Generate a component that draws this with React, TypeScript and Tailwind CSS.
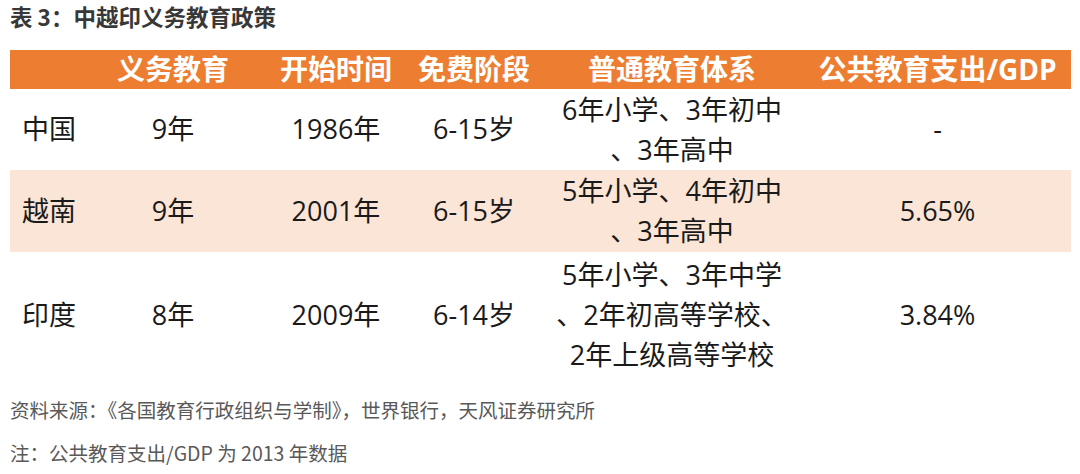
import React from "react";

const grid = "grid grid-cols-[100px_126px_200px_76px_320px_239px]";
const cell = "flex items-center justify-center whitespace-nowrap";

type RowData = {
  country: string;
  years: string;
  start: string;
  free: string;
  system: string[];
  gdp: string;
  h: string;
  bg: string;
};

const rows: RowData[] = [
  {
    country: "中国",
    years: "9年",
    start: "1986年",
    free: "6-15岁",
    system: ["6年小学、3年初中", "、3年高中"],
    gdp: "-",
    h: "h-[81px]",
    bg: "bg-white",
  },
  {
    country: "越南",
    years: "9年",
    start: "2001年",
    free: "6-15岁",
    system: ["5年小学、4年初中", "、3年高中"],
    gdp: "5.65%",
    h: "h-[82px]",
    bg: "bg-[#fbe5d6]",
  },
  {
    country: "印度",
    years: "8年",
    start: "2009年",
    free: "6-14岁",
    system: ["5年小学、3年中学", "、2年初高等学校、", "2年上级高等学校"],
    gdp: "3.84%",
    h: "h-[126px]",
    bg: "bg-white",
  },
];

export default function App() {
  return (
    <div className="w-[1080px] h-[474px] bg-white overflow-hidden font-['Open_Sans','Noto_Sans_CJK_SC',sans-serif]">
      <div className="pl-[10px] h-[33px] leading-[33px] text-[22.5px] font-bold text-[#383838] font-['Noto_Sans_CJK_SC',sans-serif]">
        表 3：中越印义务教育政策
      </div>
      <div className="ml-[10px] mt-[17px] w-[1061px]">
        <div className={`${grid} h-[39px] bg-[#ed7d31] text-white text-[28px] font-bold leading-[39px]`}>
          <div />
          <div className={cell}>义务教育</div>
          <div className={cell}>开始时间</div>
          <div className={cell}>免费阶段</div>
          <div className={cell}>普通教育体系</div>
          <div className={`${cell} pr-[28px]`}>公共教育支出/GDP</div>
        </div>
        {rows.map((r) => (
          <div key={r.country} className={`${grid} ${r.h} ${r.bg} text-[27px] text-[#1a1a1a]`}>
            <div className="flex items-center pl-[12px] whitespace-nowrap">{r.country}</div>
            <div className={cell}>{r.years}</div>
            <div className={cell}>{r.start}</div>
            <div className={cell}>{r.free}</div>
            <div className="flex flex-col items-center justify-center leading-[40px] whitespace-nowrap">
              {r.system.map((l, i) => (
                <div key={i}>{l}</div>
              ))}
            </div>
            <div className={`${cell} pr-[28px]`}>{r.gdp}</div>
          </div>
        ))}
      </div>
      <div className="pl-[10px] mt-[18px] h-[28px] leading-[28px] text-[19.5px] text-[#595959] whitespace-nowrap font-['Noto_Sans_CJK_SC',sans-serif]">
        资料来源：《各国教育行政组织与学制》，世界银行，天风证券研究所
      </div>
      <div className="pl-[10px] mt-[15px] h-[28px] leading-[28px] text-[19.5px] text-[#595959] whitespace-nowrap font-['Noto_Sans_CJK_SC',sans-serif]">
        注：公共教育支出/GDP 为 2013 年数据
      </div>
    </div>
  );
}
